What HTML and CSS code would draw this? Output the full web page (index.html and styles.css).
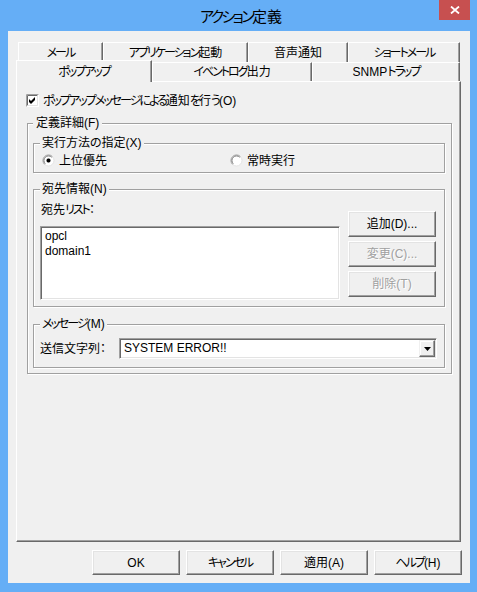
FILE: index.html
```html
<!DOCTYPE html>
<html lang="ja">
<head>
<meta charset="utf-8">
<title>アクション定義</title>
<link rel="stylesheet" href="styles.css">
</head>
<body>
<div class="window">
  <div class="titlebar">
    <div class="title"><span class="k">アクション</span>定義</div>
    <div class="close"><svg width="10" height="8" viewBox="0 0 10 8"><path d="M1 0.5L9 7.5M9 0.5L1 7.5" stroke="#fff" stroke-width="1.8" fill="none"/></svg></div>
  </div>
  <div class="client">
    <div class="tabrow row1">
      <div class="tab t-mail"><span class="k">メール</span></div>
      <div class="tab t-app"><span class="k">アプリケーション</span>起動</div>
      <div class="tab t-voice">音声通知</div>
      <div class="tab t-short"><span class="k">ショートメール</span></div>
    </div>
    <div class="tabrow row2">
      <div class="tab sel t-popup"><span class="k">ポップアップ</span></div>
      <div class="tab t-event"><span class="k">イベントログ</span>出力</div>
      <div class="tab t-snmp">SNMP<span class="k">トラップ</span></div>
    </div>
    <div class="panel">
      <div class="check-row">
        <svg class="checkbox" width="13" height="13" viewBox="0 0 13 13">
          <rect x="0" y="0" width="13" height="13" fill="#fff"/>
          <path d="M0.5 12.5V0.5H12.5" stroke="#a0a0a0" fill="none"/>
          <path d="M1.5 11.5V1.5H11.5" stroke="#696969" fill="none"/>
          <path d="M1.5 11.5H11.5V1.5" stroke="#e3e3e3" fill="none"/>
          <polygon points="3,5 5,7 9,3 9,6 5,10 3,8" fill="#000"/>
        </svg>
        <span><span class="k">ポップアップメッセージによる</span>通知<span class="k">を</span>行<span class="k">う</span>(O)</span>
      </div>
      <fieldset class="group outer">
        <legend>定義詳細(F)</legend>
        <fieldset class="group exec">
          <legend>実行方法の指定(X)</legend>
          <div class="radios">
            <div class="radio">
              <svg width="13" height="13" viewBox="0 0 13 13">
                <circle cx="6.5" cy="6.5" r="5.5" fill="#fff" stroke="#e3e3e3"/>
                <path d="M2.6 10.4A5.5 5.5 0 0 1 10.4 2.6" stroke="#a0a0a0" fill="none"/>
                <path d="M3.3 9.7A4.5 4.5 0 0 1 9.7 3.3" stroke="#696969" fill="none" stroke-width="0.8"/>
                <rect x="5" y="5" width="3" height="3" fill="#000"/>
                <rect x="4.5" y="5.5" width="4" height="2" fill="#000"/>
                <rect x="5.5" y="4.5" width="2" height="4" fill="#000"/>
              </svg>
              <span>上位優先</span>
            </div>
            <div class="radio">
              <svg width="13" height="13" viewBox="0 0 13 13">
                <circle cx="6.5" cy="6.5" r="5.5" fill="#fff" stroke="#e3e3e3"/>
                <path d="M2.6 10.4A5.5 5.5 0 0 1 10.4 2.6" stroke="#a0a0a0" fill="none"/>
                <path d="M3.3 9.7A4.5 4.5 0 0 1 9.7 3.3" stroke="#696969" fill="none" stroke-width="0.8"/>
              </svg>
              <span>常時実行</span>
            </div>
          </div>
        </fieldset>
        <fieldset class="group dest">
          <legend>宛先情報(N)</legend>
          <div class="dest-body">
            <div class="dest-left">
              <div class="lbl">宛先<span class="k">リスト</span>：</div>
              <div class="listbox">
                <div class="item">opcl</div>
                <div class="item">domain1</div>
              </div>
            </div>
            <div class="dest-btns">
              <button class="btn side">追加(D)...</button>
              <button class="btn side disabled">変更(C)...</button>
              <button class="btn side disabled">削除(T)</button>
            </div>
          </div>
        </fieldset>
        <fieldset class="group msg">
          <legend><span class="k">メッセージ</span>(M)</legend>
          <div class="msg-row">
            <div class="lbl">送信文字列：</div>
            <div class="combo">
              <div class="combo-text">SYSTEM ERROR!!</div>
              <div class="combo-btn"><svg width="7" height="4" viewBox="0 0 7 4"><polygon points="0,0 7,0 3.5,4" fill="#000"/></svg></div>
            </div>
          </div>
        </fieldset>
      </fieldset>
    </div>
    <div class="buttons">
      <button class="btn">OK</button>
      <button class="btn"><span class="k">キャンセル</span></button>
      <button class="btn">適用(A)</button>
      <button class="btn"><span class="k">ヘルプ</span>(H)</button>
    </div>
  </div>
</div>
</body>
</html>
```

FILE: styles.css
```css
* { box-sizing: border-box; }

body {
  margin: 0;
  width: 477px;
  height: 592px;
  background: #65aef6;
  font-family: "Liberation Sans", "Noto Sans CJK JP", sans-serif;
  font-size: 12px;
  color: #000;
  font-feature-settings: "palt";
  overflow: hidden;
}

.k {
  letter-spacing: -2px;
}

.window {
  display: flex;
  flex-direction: column;
  height: 592px;
}

.titlebar {
  height: 31px;
  display: flex;
  align-items: flex-start;
  padding-left: 43px;
}

.title {
  flex: 1;
  text-align: center;
  font-family: "Noto Sans CJK JP", sans-serif;
  font-size: 15px;
  line-height: 31px;
  color: #000;
}

.title .k {
  letter-spacing: -2.6px;
}

.close {
  width: 31px;
  height: 20px;
  margin-right: 7px;
  background: #c75050;
  display: flex;
  align-items: center;
  justify-content: center;
}

.client {
  height: 552px;
  margin: 0 7px 0 8px;
  background: #f0f0f0;
  display: flex;
  flex-direction: column;
  padding: 11px 8px 8px 8px;
}

.tabrow {
  display: flex;
  align-items: flex-start;
}

.row1 {
  height: 20px;
  margin-left: 2px;
}

.row2 {
  height: 19px;
}

.tab {
  height: 100%;
  background: #f0f0f0;
  border-top: 1px solid #fff;
  border-left: 1px solid #fff;
  border-right: 1px solid #696969;
  box-shadow: inset -1px 0 0 #a0a0a0;
  display: flex;
  align-items: center;
  justify-content: center;
  line-height: 14px;
  white-space: nowrap;
}

.tab.sel {
  height: 22px;
  margin-top: -2px;
  position: relative;
  z-index: 1;
}

.t-mail { width: 85px; }
.t-app { width: 145px; }
.t-voice { width: 100px; }
.t-short { width: 112px; }
.t-popup { width: 136px; }
.t-event { width: 160px; }
.t-snmp { width: 148px; }

.panel {
  flex: 1;
  margin-right: 1px;
  background: #f0f0f0;
  border-top: 1px solid #fff;
  border-left: 1px solid #fff;
  border-right: 1px solid #696969;
  border-bottom: 1px solid #696969;
  box-shadow: inset -1px -1px 0 #a0a0a0;
  padding-top: 12px;
}

.check-row {
  display: flex;
  align-items: center;
  gap: 4px;
  height: 13px;
  margin-left: 9px;
  line-height: 14px;
}

.checkbox { flex: none; }

.group {
  border: 1px solid #a0a0a0;
  box-shadow: inset 1px 1px 0 #fff, 1px 1px 0 #fff;
  margin: 0;
  min-width: 0;
  padding: 0;
}

.group > legend {
  padding: 0 2px;
  line-height: 14px;
  background: #f0f0f0;
}

.outer {
  margin: 9px 8px 0 10px;
  padding: 6px 6px 5px 5px;
}

.outer > legend { padding: 0 3px; }

.exec {
  padding: 4px 7px 5px 6px;
}

.radios {
  display: grid;
  grid-template-columns: 188px 1fr;
  margin-left: 2px;
}

.radio {
  display: flex;
  align-items: center;
  gap: 4px;
  height: 13px;
  line-height: 14px;
}

.radio svg { flex: none; }

.dest {
  margin-top: 9px;
  padding: 7px 7px 6px 6px;
}

.dest-body {
  display: grid;
  grid-template-columns: 300px 88px;
  column-gap: 8px;
}

.lbl {
  line-height: 14px;
  white-space: nowrap;
}

.dest-left .lbl {
  padding-left: 1px;
}

.listbox {
  margin-top: 9px;
  height: 74px;
  background: #fff;
  border: 1px solid;
  border-color: #a0a0a0 #fff #fff #a0a0a0;
  box-shadow: inset 1px 1px 0 #696969, inset -1px -1px 0 #e3e3e3;
  padding: 2px 4px;
}

.item {
  line-height: 15px;
}

.dest-btns {
  display: flex;
  flex-direction: column;
  gap: 4px;
  padding-top: 8px;
}

.btn {
  width: 88px;
  height: 25px;
  margin: 0;
  padding: 0;
  font: inherit;
  color: #000;
  background: #f0f0f0;
  border: 1px solid;
  border-color: #fff #696969 #696969 #fff;
  box-shadow: inset -1px -1px 0 #a0a0a0, inset 1px 1px 0 #e3e3e3;
  line-height: 14px;
}

.btn.side {
  height: 26px;
}

.btn.disabled {
  color: #a0a0a0;
  text-shadow: 1px 1px 0 #fff;
}

.msg {
  margin-top: 10px;
  padding: 7px 7px 8px 6px;
}

.msg-row {
  display: grid;
  grid-template-columns: 79px 1fr;
  align-items: center;
}

.combo {
  height: 21px;
  display: flex;
  background: #fff;
  border: 1px solid;
  border-color: #a0a0a0 #fff #fff #a0a0a0;
  box-shadow: inset 1px 1px 0 #696969, inset -1px -1px 0 #e3e3e3;
  padding: 1px;
}

.combo-text {
  flex: 1;
  padding-left: 3px;
  line-height: 17px;
}

.combo-btn {
  width: 16px;
  height: 17px;
  background: #f0f0f0;
  border: 1px solid;
  border-color: #f0f0f0 #696969 #696969 #f0f0f0;
  box-shadow: inset -1px -1px 0 #a0a0a0, inset 1px 1px 0 #fff;
  display: flex;
  align-items: center;
  justify-content: center;
}

.buttons {
  display: flex;
  justify-content: flex-end;
  gap: 6px;
  margin-top: 8px;
}
```
